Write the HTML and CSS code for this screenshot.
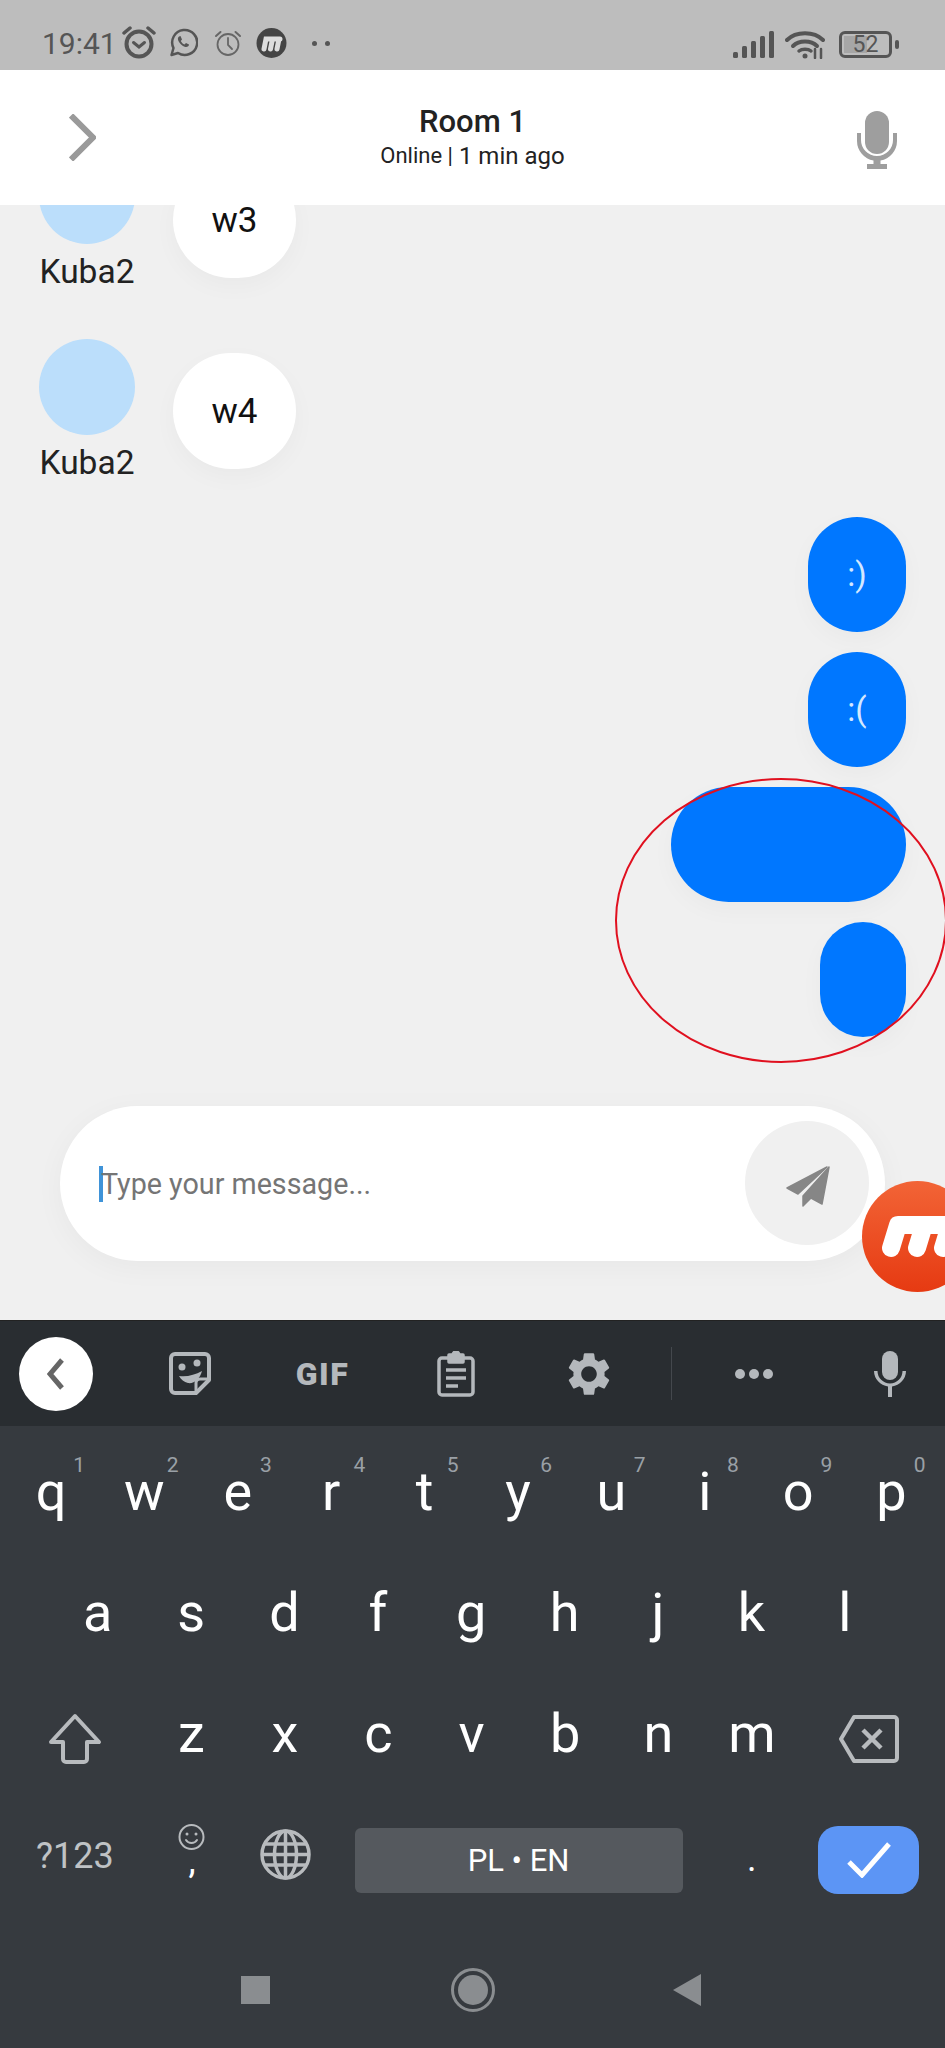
FILE: index.html
```html
<!DOCTYPE html>
<html lang="en">
<head>
<meta charset="utf-8">
<title>Room 1</title>
<link rel="stylesheet" href="styles.css">
</head>
<body>
<div class="app">
  <div class="status">
    <span class="time">19:41</span>
    <svg class="st st-alarm" width="34" height="33" viewBox="0 0 34 33" fill="none" stroke="#555" stroke-linecap="round"><circle cx="17" cy="18" r="12.500" stroke-width="4"/><path d="M2 7 8 2M32 7 26 2" stroke-width="3.500"/><path d="M11.500 16.500 17 21l5.500-4.500" stroke-width="3"/></svg>
    <svg class="st st-wa" width="29" height="29" viewBox="0 0 29 29" fill="none" stroke="#555"><path d="M2.500 27 4.500 20A12.500 12.500 0 1 1 9 25Z" stroke-width="2.500" stroke-linejoin="round"/><path d="M10 8.500c-1.500 1-1.500 3 0 5.500 2 3 4.500 4.500 6.500 5 2 .3 3.500-1 3.500-2.500l-3-1.500-1.500 1.500c-1.500-.5-3-2-3.700-3.500l1.200-1.500L11.500 8Z" fill="#555" stroke="none"/></svg>
    <svg class="st st-alarm2" width="28" height="26" viewBox="0 0 28 26" fill="none" stroke="#666" stroke-linecap="round"><circle cx="14" cy="14.500" r="10.500" stroke-width="1.800"/><path d="M2 6 6.500 2M26 6 21.500 2" stroke-width="2"/><path d="M14 8v7l4 4" stroke-width="1.800"/></svg>
    <svg class="st st-m" width="31" height="30" viewBox="0 0 31 30"><circle cx="15.500" cy="15" r="15" fill="#444"/><path d="M8 21 10 11H24M14.500 21 16.500 11M21 21 23 11" fill="none" stroke="#ddd" stroke-width="5" stroke-linecap="round"/></svg>
    <span class="st-dots"><i class="dot"></i><i class="dot"></i></span>
    <span class="st-right">
      <svg class="st-signal" width="42" height="27" viewBox="0 0 42 27" fill="#555"><rect x="0" y="21" width="5" height="6" rx="1.500"/><rect x="9" y="15" width="5" height="12" rx="1.500"/><rect x="18" y="10" width="5" height="17" rx="1.500"/><rect x="27" y="5" width="5" height="22" rx="1.500"/><rect x="36" y="0" width="5" height="27" rx="1.500"/></svg>
      <svg width="40" height="29" viewBox="0 0 40 29" fill="none" stroke="#555" stroke-width="4" stroke-linecap="round"><path d="M2 10C11 1 29 1 38 10"/><path d="M8 16C14 10 26 10 32 16"/><path d="M14 21c3-2.500 9-2.500 12 0" stroke-width="3.500"/><circle cx="20" cy="26" r="2.500" fill="#555" stroke="none"/><path d="M30 19v9M36 19v9" stroke-width="2.500"/></svg>
      <span class="battery"><span class="battery-level"></span><span class="battery-text">52</span></span>
      <span class="battery-tip"></span>
    </span>
  </div>

  <header class="header">
    <svg class="hd-back" width="27" height="47" viewBox="0 0 27 47" fill="none" stroke="#9a9a9a" stroke-width="6"><path d="M2 1.500 24 23.500 2 45.500"/></svg>
    <div class="hd-title">
      <div class="room">Room 1</div>
      <div class="sub"><span class="online">Online |</span> 1 min ago</div>
    </div>
    <svg class="hd-mic" width="40" height="58" viewBox="0 0 40 58" fill="#9e9e9e"><rect x="8" y="0" width="24" height="43" rx="12"/><path d="M0 22h4v7a16 16 0 0 0 32 0v-7h4v8a20 20 0 0 1-16.500 19.500V53H30v5H10v-5h6.500v-3.500A20 20 0 0 1 0 30Z"/></svg>
  </header>

  <main class="chat">
    <div class="msg-in">
      <div class="who"><div class="avatar"></div><div class="name">Kuba2</div></div>
      <div class="bubble-in">w3</div>
    </div>
    <div class="msg-in msg-last">
      <div class="who"><div class="avatar"></div><div class="name">Kuba2</div></div>
      <div class="bubble-in">w4</div>
    </div>
    <div class="bubble-out">:)</div>
    <div class="bubble-out">:(</div>
    <div class="bubble-out bubble-wide"></div>
    <div class="bubble-out bubble-small"></div>

    <div class="composer">
      <span class="caret"></span>
      <span class="placeholder">Type your message...</span>
      <span class="send">
        <svg width="50" height="50" viewBox="37 37 50 50" fill="#868686" stroke="#868686" stroke-width="1.500" stroke-linejoin="round"><path d="M82 46 42 67 53 73Z"/><path d="M84 46 77 83 66 77 58 85 58 75Z"/></svg>
      </span>
    </div>
  </main>

  <section class="kb">
    <div class="tools">
      <span class="tool-back">
        <svg width="18" height="32" viewBox="0 0 18 32" fill="none" stroke="#666" stroke-width="5"><path d="M15 2 3 16 15 30"/></svg>
      </span>
      <span class="tool">
        <svg width="42" height="43" viewBox="0 0 42 43" fill="none" stroke="#b4b8bc" stroke-width="4" stroke-linejoin="round"><path d="M6 2h30a4 4 0 0 1 4 4v22L27 41H6a4 4 0 0 1-4-4V6a4 4 0 0 1 4-4Z"/><path d="M40 27H31a4 4 0 0 0-4 4v10" stroke-width="3"/><circle cx="13" cy="15" r="3.500" fill="#b4b8bc" stroke="none"/><circle cx="28" cy="11" r="3.500" fill="#b4b8bc" stroke="none"/><path d="M10 24c8 1 16-1 23-5-2 8-8 13-14 12-4-.7-7-3.500-9-7Z" fill="#b4b8bc" stroke="none"/></svg>
      </span>
      <span class="tool tool-gif">GIF</span>
      <span class="tool">
        <svg width="38" height="46" viewBox="0 0 38 46" fill="none" stroke="#b4b8bc" stroke-width="3.500" stroke-linejoin="round"><path d="M12 7H5a3 3 0 0 0-3 3v31a3 3 0 0 0 3 3h28a3 3 0 0 0 3-3V10a3 3 0 0 0-3-3h-7"/><path d="M12 4h4a3 3 0 0 1 6 0h4v7H12Z" fill="#b4b8bc"/><path d="M9 19h20M9 27h20M9 35h12"/></svg>
      </span>
      <span class="tool">
        <svg width="52" height="52" viewBox="0 0 24 24" fill="#b4b8bc"><path d="M19.140 12.940c.04-.3.06-.61.06-.94 0-.32-.02-.64-.07-.94l2.030-1.580c.18-.14.23-.41.12-.61l-1.920-3.320c-.12-.22-.37-.29-.59-.22l-2.390.96c-.5-.38-1.030-.7-1.620-.94l-.36-2.540c-.04-.24-.24-.41-.48-.41h-3.840c-.24 0-.43.17-.47.41l-.36 2.540c-.59.24-1.130.57-1.620.94l-2.390-.96c-.22-.08-.47 0-.59.22L2.740 8.870c-.12.21-.08.47.12.61l2.030 1.580c-.05.3-.09.63-.09.94s.02.64.07.94l-2.030 1.580c-.18.14-.23.41-.12.61l1.920 3.320c.12.22.37.29.59.22l2.390-.96c.5.38 1.030.7 1.620.94l.36 2.540c.05.24.24.41.48.41h3.840c.24 0 .44-.17.47-.41l.36-2.540c.59-.24 1.130-.56 1.620-.94l2.390.96c.22.08.47 0 .59-.22l1.920-3.320c.12-.22.07-.47-.12-.61l-2.010-1.580zM12 15.600c-1.980 0-3.600-1.620-3.600-3.600s1.620-3.600 3.600-3.600 3.600 1.620 3.600 3.600-1.620 3.600-3.600 3.600z"/></svg>
      </span>
      <span class="tool-sep"></span>
      <span class="tool-dots"><i class="tdot"></i><i class="tdot"></i><i class="tdot"></i></span>
      <svg class="tool-mic" width="34" height="46" viewBox="0 0 34 46" fill="#b4b8bc"><rect x="9" y="0" width="16" height="29" rx="8"/><path d="M1 20h3.500a12.500 12.500 0 0 0 25 0H33a16 16 0 0 1-14 15.500V46h-4V35.500A16 16 0 0 1 1 20Z"/></svg>
    </div>

    <div class="row">
      <span class="key">q<sup class="hint">1</sup></span>
      <span class="key">w<sup class="hint">2</sup></span>
      <span class="key">e<sup class="hint">3</sup></span>
      <span class="key">r<sup class="hint">4</sup></span>
      <span class="key">t<sup class="hint">5</sup></span>
      <span class="key">y<sup class="hint">6</sup></span>
      <span class="key">u<sup class="hint">7</sup></span>
      <span class="key">i<sup class="hint">8</sup></span>
      <span class="key">o<sup class="hint">9</sup></span>
      <span class="key">p<sup class="hint">0</sup></span>
    </div>
    <div class="row row-home">
      <span class="key">a</span><span class="key">s</span><span class="key">d</span><span class="key">f</span><span class="key">g</span><span class="key">h</span><span class="key">j</span><span class="key">k</span><span class="key">l</span>
    </div>
    <div class="row">
      <span class="key-wide">
        <svg width="54" height="51" viewBox="0 0 54 51" fill="none" stroke="#b8bbbe" stroke-width="4" stroke-linejoin="round"><path d="M27 3 51 29H39V46a3 3 0 0 1-3 3H18a3 3 0 0 1-3-3V29H3Z"/></svg>
      </span>
      <span class="key">z</span><span class="key">x</span><span class="key">c</span><span class="key">v</span><span class="key">b</span><span class="key">n</span><span class="key">m</span>
      <span class="key-wide">
        <svg width="60" height="48" viewBox="0 0 60 48" fill="none" stroke="#b8bbbe" stroke-width="4" stroke-linejoin="round"><path d="M15 2H55a3 3 0 0 1 3 3V43a3 3 0 0 1-3 3H15L2 24Z"/><path d="M24 15 42 33M42 15 24 33" stroke-width="4.500"/></svg>
      </span>
    </div>
    <div class="row row-bottom">
      <span class="k-sym">?123</span>
      <span class="k-emoji">
        <svg width="27" height="26" viewBox="0 0 27 26" fill="none" stroke="#b8bbbe" stroke-width="2" stroke-linecap="round"><circle cx="13.500" cy="13" r="12"/><circle cx="9" cy="10" r="1.500" fill="#b8bbbe" stroke="none"/><circle cx="18" cy="10" r="1.500" fill="#b8bbbe" stroke="none"/><path d="M8 16c2.500 4 8.500 4 11 0"/></svg>
        <span class="comma">,</span>
      </span>
      <span class="k-globe">
        <svg width="51" height="51" viewBox="0 0 51 51" fill="none" stroke="#b8bbbe" stroke-width="3.500"><circle cx="25.500" cy="25.500" r="23.500"/><ellipse cx="25.500" cy="25.500" rx="11" ry="23.500"/><path d="M5 15H46M5 36H46M25.500 2V49M2 25.500H49"/></svg>
      </span>
      <span class="k-space-cell"><span class="k-space">PL • EN</span></span>
      <span class="k-period">.</span>
      <span class="k-enter">
        <svg width="44" height="36" viewBox="0 0 44 36" fill="none" stroke="#fff" stroke-width="5"><path d="M2 20 15 33 42 2"/></svg>
      </span>
    </div>
    <div class="nav">
      <span class="nav-square"></span>
      <span class="nav-home"><span class="nav-home-in"></span></span>
      <svg class="nav-back" width="28" height="32" viewBox="0 0 28 32" fill="#8a8d90"><path d="M28 0V32L0 16Z"/></svg>
    </div>
  </section>

  <svg class="float-m" width="111" height="111" viewBox="0 0 111 111">
    <defs><linearGradient id="mg" x1="0" y1="0" x2="0" y2="1"><stop offset="0" stop-color="#f26436"/><stop offset="1" stop-color="#e63a12"/></linearGradient></defs>
    <circle cx="55.500" cy="55.500" r="55.500" fill="url(#mg)"/>
    <path d="M29 67 36 44H110M55 67 62 44M81 67 88 44" fill="none" stroke="#fff" stroke-width="18" stroke-linecap="round" stroke-linejoin="round"/>
  </svg>
  <svg class="annot" width="945" height="2048" viewBox="0 0 945 2048" fill="none"><ellipse cx="781" cy="920.500" rx="165" ry="141.500" stroke="#e0101f" stroke-width="2"/></svg>
</div>
</body>
</html>
```

FILE: styles.css
```css
* { box-sizing: border-box; }
html, body { margin: 0; padding: 0; }
body { font-family: Roboto, "Noto Sans", sans-serif; background: #f0f0f0; }
.app { position: relative; width: 945px; height: 2048px; overflow: hidden; display: flex; flex-direction: column; }

/* status bar */
.status { height: 70px; flex: none; background: #bdbdbd; display: flex; align-items: center; padding: 0 46px 0 42px; color: #555; }
.time { font-size: 30px; line-height: 34px; margin-top: 17px; width: 80px; }
.st { flex: none; display: block; }
.st-alarm { margin-top: 15px; }
.st-wa { margin: 15px 0 0 13px; }
.st-alarm2 { margin: 16px 0 0 16px; }
.st-m { margin: 16px 0 0 14px; }
.st-dots { display: flex; gap: 8px; margin: 16px 0 0 25px; }
.dot { width: 5px; height: 5px; border-radius: 50%; background: #555; }
.st-right { margin-left: auto; display: flex; align-items: center; gap: 11px; margin-top: 18px; }
.st-signal { margin-right: -1px; }
.battery { position: relative; width: 53px; height: 27px; border: 3px solid #555; border-radius: 6px; margin-left: 3px; display: flex; align-items: center; justify-content: center; overflow: hidden; }
.battery-level { position: absolute; left: 2px; top: 2px; bottom: 2px; width: 23px; background: #a6a6a6; }
.battery-text { position: relative; font-size: 23px; line-height: 1; color: #555; }
.battery-tip { width: 4px; height: 9px; background: #555; border-radius: 2px; margin-left: -8px; }

/* header */
.header { height: 135px; flex: none; background: #fff; display: grid; grid-template-columns: 1fr auto 1fr; align-items: center; padding: 0 48px; position: relative; z-index: 2; }
.hd-back { margin-left: 21px; justify-self: start; }
.hd-mic { justify-self: end; margin-top: 5px; }
.hd-title { text-align: center; color: #222; }
.room { font-size: 31px; line-height: 36px; font-weight: 500; margin-top: 1px; }
.sub { font-size: 24px; line-height: 32px; color: #222; }
.online { font-size: 22px; vertical-align: 1px; }

/* chat */
.chat { height: 1115px; flex: none; background: #f0f0f0; display: flex; flex-direction: column; justify-content: flex-end; overflow: hidden; padding-bottom: 59px; }
.msg-in { display: flex; flex: none; gap: 38px; padding-left: 39px; margin-bottom: 44px; }
.msg-last { margin-bottom: 31px; }
.who { width: 96px; }
.avatar { width: 96px; height: 96px; border-radius: 50%; background: #bbdefb; }
.name { font-size: 33.500px; line-height: 46px; margin-top: 5px; text-align: center; color: #222; white-space: nowrap; }
.bubble-in { width: 123px; height: 116px; margin-top: 14px; border-radius: 58px; background: #fff; box-shadow: 0 8px 24px rgba(0,0,0,.03); display: flex; align-items: center; justify-content: center; font-size: 35px; color: #111; }
.bubble-out { flex: none; align-self: flex-end; width: 98px; height: 115px; margin: 0 39px 20px 0; border-radius: 58px; background: #0077ff; box-shadow: 0 8px 24px rgba(0,0,0,.03); display: flex; align-items: center; justify-content: center; font-size: 33px; color: #d4e8ff; }
.bubble-wide { width: 235px; }
.bubble-small { width: 86px; margin-bottom: 69px; }

.composer { flex: none; width: 825px; height: 155px; margin-left: 60px; border-radius: 78px; background: #fff; box-shadow: 0 6px 30px rgba(0,0,0,.04); display: flex; align-items: center; padding: 0 16px 0 39px; }
.caret { width: 4px; height: 36px; background: #3f93d8; flex: none; }
.placeholder { font-size: 28.700px; color: #757575; white-space: nowrap; margin-left: -2px; }
.send { margin: -2px 0 0 auto; width: 124px; height: 124px; border-radius: 50%; background: #f0f0f0; display: flex; align-items: center; justify-content: center; }

/* keyboard */
.kb { flex: 1; background: #363a3f; display: flex; flex-direction: column; border-top: 1px solid #222; }
.tools { height: 105px; flex: none; background: #292d31; display: flex; align-items: center; padding-left: 19px; }
.tool-back { width: 74px; height: 74px; margin-right: 30px; border-radius: 50%; background: #fff; display: flex; align-items: center; justify-content: center; flex: none; }
.tool { width: 133px; flex: none; display: flex; align-items: center; justify-content: center; }
.tool-gif { font-size: 32px; font-weight: 900; letter-spacing: 1.500px; color: #b4b8bc; line-height: 1; }
.tool-sep { width: 1px; height: 53px; background: #44484d; margin-left: 16px; flex: none; }
.tool-dots { display: flex; gap: 4px; margin-left: 63px; }
.tdot { width: 10px; height: 10px; border-radius: 50%; background: #b4b8bc; }
.tool-mic { margin-left: 100px; }

.row { height: 121px; flex: none; display: flex; padding-left: 4.300px; }
.row-home { padding-left: 51px; }
.key { position: relative; width: 93.400px; flex: none; padding-top: 8px; text-align: center; font-size: 54px; line-height: 115px; color: #fff; }
.hint { position: absolute; top: 29px; left: 69px; font-size: 21px; line-height: 21px; color: #9aa0a6; vertical-align: baseline; }
.key-wide { width: 140.500px; flex: none; display: flex; align-items: center; justify-content: center; padding-top: 20px; }

.row-bottom { align-items: flex-start; }
.k-sym { width: 141px; flex: none; text-align: center; font-size: 36px; line-height: 40px; margin-top: 47px; color: #bfc2c5; }
.k-emoji { width: 93.400px; flex: none; display: flex; flex-direction: column; align-items: center; margin-top: 35px; }
.comma { font-size: 36px; line-height: 30px; color: #fff; margin-top: -4px; }
.k-globe { width: 93.400px; flex: none; display: flex; justify-content: center; margin-top: 40px; }
.k-space-cell { width: 373px; flex: none; display: flex; justify-content: center; margin-top: 39px; }
.k-space { width: 328px; height: 65px; background: #55595e; border-radius: 6px; display: flex; align-items: center; justify-content: center; font-size: 31px; color: #fff; }
.k-period { width: 93.400px; flex: none; text-align: center; font-size: 36px; line-height: 40px; margin-top: 50px; color: #fff; }
.k-enter { width: 101px; height: 68px; margin: 37px 0 0 20px; flex: none; background: #5c95f5; border-radius: 20px; display: flex; align-items: center; justify-content: center; }

.nav { flex: 1; display: flex; align-items: center; padding: 0 0 0 241px; margin-top: 22px; }
.nav-square { width: 29px; height: 28px; background: #8a8d90; }
.nav-home { width: 44px; height: 44px; margin-left: 181px; border: 3px solid #8a8d90; border-radius: 50%; display: flex; align-items: center; justify-content: center; }
.nav-home-in { width: 30px; height: 30px; border-radius: 50%; background: #8a8d90; }
.nav-back { margin-left: 178px; }

/* overlays */
.float-m { position: absolute; left: 862px; top: 1181px; }
.annot { position: absolute; left: 0; top: 0; pointer-events: none; }
```
